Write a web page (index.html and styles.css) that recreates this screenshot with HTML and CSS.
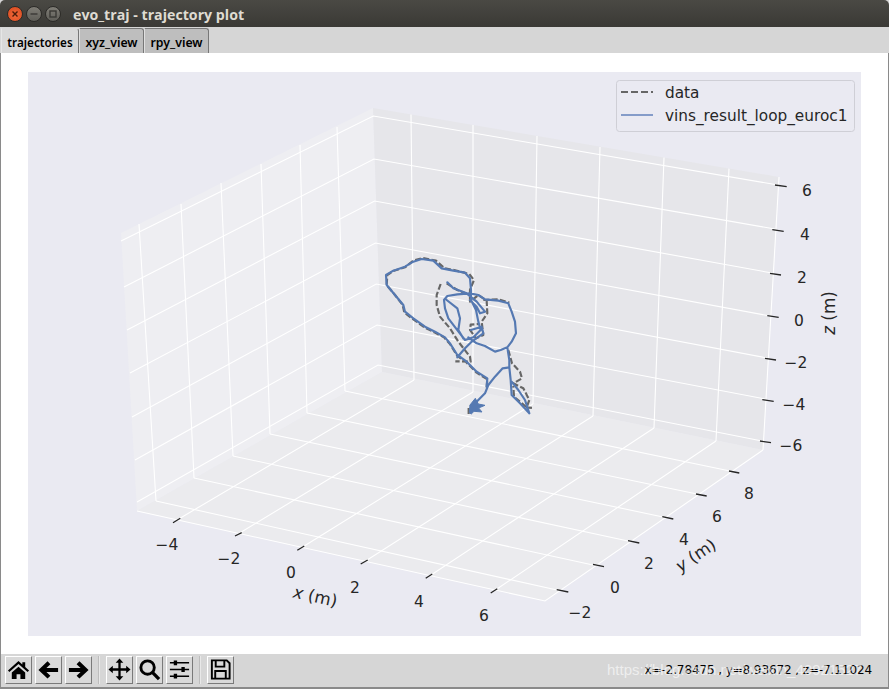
FILE: index.html
```html
<!DOCTYPE html>
<html lang="en">
<head>
<meta charset="utf-8">
<title>evo_traj - trajectory plot</title>
<link rel="stylesheet" href="styles.css">
</head>
<body>
<div class="window">
  <header class="titlebar">
    <span class="wbtn close"><svg viewBox="0 0 10 10" class="wglyph"><path d="M2.500 2.500l5 5M7.500 2.500l-5 5"/></svg></span>
    <span class="wbtn min"><svg viewBox="0 0 10 10" class="wglyph dim"><path d="M1.500 5h7"/></svg></span>
    <span class="wbtn max"><svg viewBox="0 0 10 10" class="wglyph dim"><rect x="2" y="2" width="6" height="6"/></svg></span>
    <span class="wtitle">evo_traj - trajectory plot</span>
  </header>
  <nav class="tabs">
    <span class="tab active">trajectories</span>
    <span class="tab">xyz_view</span>
    <span class="tab">rpy_view</span>
  </nav>
  <main class="figure">
    <svg class="plot" viewBox="28 72 833 564" width="833" height="564">
      <polygon class="pane-left" points="121,233 373,108 382,372 137,511"/>
      <polygon class="pane-right" points="373,108 779,177 763,450 382,372"/>
      <polygon class="pane-floor" points="137,511 382,372 763,450 545,601"/>

      <g class="grid">
        <path d="M121 241L373.300 116L778 185M124 287L374 159L775 229M127 330L374.600 201L772 273M130 373L375.400 243L770 316M132 417L376.200 284L767 358M135 460L377 325L765 399M137 502L378 365L762 441"/>
        <path d="M139 224L156 501M181 204L194 478M221 183L233 456M261 164L270 434M300 145L307 413M337 127L345 391"/>
        <path d="M411 114.500L414 380M473 125L473 392M537 136L533 404M600 147L593 416M664 157.500L654 428M729 168.600L716 441M779 177L763 450"/>
        <path d="M156 501L557 590M194 478L593 565M233 456L628 541M270 434L663 517M307 413L697 494M345 391L730 471"/>
        <path d="M177 520L414 380M238 534L473 392M301 548L533 404M364 562L593 416M428 577L654 428M494 591L716 441"/>
        <path d="M137 511L545 601L763 450"/>
      </g>

      <g class="ticks">
        <path d="M173 522.700L180.300 518.300M235 536L241.700 532.700M297.300 550.300L304.300 546M360.700 564L367.700 560M425.700 578.300L432.300 574M490.700 593L497.300 588.700"/>
        <path d="M729 471L739.300 473M696 494L706.700 496M662.300 516.700L673.300 519M628 540.700L639.300 543M593 564.300L604 566.700M556.700 589.700L568.300 592"/>
        <path d="M775 185L786.700 186.700M772.300 229.700L783.700 231.300M770 273.300L781 275M767.300 315.700L778.700 317.300M765 358.300L776 360M762.300 399.700L773.700 401.300M760 441L771 442.700"/>
      </g>

      <g class="tlabels">
        <text x="807" y="196">6</text><text x="805" y="240">4</text><text x="802" y="283">2</text><text x="799" y="326">0</text><text x="796" y="368">−2</text><text x="794" y="410">−4</text><text x="791" y="451">−6</text>
        <text x="167" y="550">−4</text><text x="229" y="564">−2</text><text x="291" y="578">0</text><text x="355" y="593">2</text><text x="419" y="607">4</text><text x="484" y="621">6</text>
        <text x="580" y="618">−2</text><text x="615" y="593">0</text><text x="649" y="569">2</text><text x="684" y="545">4</text><text x="717" y="522">6</text><text x="749" y="499">8</text>
      </g>
      <text class="axlabel" transform="translate(314 602) rotate(12.500)"><tspan class="ital">x</tspan> (m)</text>
      <text class="axlabel" transform="translate(699 560) rotate(-34)"><tspan class="ital">y</tspan> (m)</text>
      <text class="axlabel" transform="translate(835 313) rotate(-90)"><tspan class="ital">z</tspan> (m)</text>

      <g transform="translate(370 250) scale(0.3333)">
        <path class="traj-data" d="M296 492L296 472L312 462M350 412L352 388L320 368L290 338L262 318L240 282L222 262L195 248L165 233L130 208L103 188L98 165L75 135L50 105L52 75L72 62L105 52L130 32L158 24L198 32L224 55L252 60L298 72L312 90L300 120L300 155L325 135L350 152L352 190L335 215L340 255L318 265L300 240L302 224L326 222M212 102L200 135L200 165L210 200L240 235L265 275L300 320L302 335L256 334M230 100L262 120L292 132M415 300L426 340L450 365L456 385L430 400L460 415L478 450L470 472L432 440L430 408M340 150L385 148L418 158M468 472L490 474"/>
        <path class="traj-est" d="M350 410L352 385L320 365L290 335L262 315L240 280L225 262L195 245L165 230L130 205L105 185L100 165L75 135L50 105L48 75L70 62L105 50L130 35L155 27L190 32L215 55L250 62L285 68L300 85L303 120L303 150L318 180L325 215L332 240L310 262L285 270L258 235L235 205L225 175L222 150L232 138L262 133L300 130L325 135L345 148L385 152L415 160L425 185L435 215L438 250L425 275L412 292L392 300L375 305L345 288L320 280L295 262M232 97L250 115L290 130L320 155L345 185L330 190L320 170L300 150M230 150L262 175L270 205L265 240L280 265M262 322L285 295L305 275L340 250L335 230L303 240M412 292L418 330L418 352L398 355L375 380L355 405L345 430L325 450L305 470M418 352L422 390L425 435L450 460L478 490M425 395L445 420L465 450L478 490"/>
        <path class="traj-blob" d="M316 445L325 462L345 466L326 474L336 486L312 484L304 492L298 488L300 465z"/>
      </g>

      <rect class="legend-box" x="616.500" y="80.500" width="238" height="51" rx="3"/>
      <line class="legend-data" x1="621" y1="92" x2="653" y2="92"/>
      <line class="legend-est" x1="621" y1="115" x2="653" y2="115"/>
      <text class="legend-text" x="665" y="98">data</text>
      <text class="legend-text" x="665" y="121">vins_result_loop_euroc1</text>
    </svg>
  </main>
  <footer class="toolbar">
    <div class="tools">
      <span class="tool"><svg viewBox="0 0 24 24"><path class="ic" d="M12 3L1 13l1.500 1.600L12 6.200l9.500 8.400L23 13l-4-3.600V4.500h-3v2.200zM5 15.200V22h5v-5h4v5h5v-6.800L12 9z"/></svg></span>
      <span class="tool"><svg viewBox="0 0 24 24"><path class="ic" d="M11 3.500l3 3L9.800 10.500H22v4H9.800L14 18.500l-3 3L1.500 12.500z"/></svg></span>
      <span class="tool"><svg viewBox="0 0 24 24"><path class="ic" d="M13 3.500l-3 3 4.200 4H2v4h12.200L10 18.500l3 3 9.500-9z"/></svg></span>
      <span class="sep"></span>
      <span class="tool"><svg viewBox="0 0 24 24"><path class="ic" d="M12 0.500l4 4.500h-2.800v5.800H19V8l4.500 4-4.500 4v-2.800h-5.800V19H16l-4 4.500L8 19h2.800v-5.800H5V16L.5 12 5 8v2.800h5.800V5H8z"/></svg></span>
      <span class="tool"><svg viewBox="0 0 24 24"><circle class="ics" cx="10" cy="10" r="7" stroke-width="3"/><path class="ics" d="M15 15l7 7" stroke-width="3.500"/></svg></span>
      <span class="tool"><svg viewBox="0 0 24 24"><path class="ics" d="M2 5h20M2 12h20M2 19h20" stroke-width="1.500"/><path class="ic" d="M6 2.500h3.500v5H6zM14 9.500h3.500v5H14zM6 16.500h3.500v5H6z"/></svg></span>
      <span class="sep"></span>
      <span class="tool"><svg viewBox="0 0 24 24"><path class="ics" d="M3 2.500h15.500l3 3V21.500H3z" stroke-width="2"/><path class="ics" d="M7 3v6h9V3M6.500 21v-7.500h11V21" stroke-width="2"/></svg></span>
    </div>
    <span class="coords">x=-2.78475 , y=8.93672 , z=-7.11024</span>
  </footer>
  <span class="watermark">https://blog.csdn.net/weixin_40921527</span>
</div>
</body>
</html>
```
FILE: styles.css
```css
* { box-sizing: border-box; }
html, body { margin: 0; padding: 0; height: 100%; overflow: hidden; background: #3a3935; }
.window { position: relative; width: 889px; height: 689px; display: flex; flex-direction: column; background: #d6d6d6; }

.titlebar { height: 27px; flex: none; display: flex; align-items: center; padding: 1px 0 0 7px; background: linear-gradient(#4a4944, #3a3935); border-radius: 5px 5px 0 0; }
.wbtn { width: 16px; height: 16px; border-radius: 50%; display: flex; align-items: center; justify-content: center; margin-right: 3px; }
.wbtn.close { background: radial-gradient(circle at 50% 60%, #f0693a, #d8481d); border: 1px solid #2c2b28; }
.wbtn.min, .wbtn.max { background: linear-gradient(#7f7d76, #5f5e58); border: 1px solid #2c2b28; }
.wglyph { width: 10px; height: 10px; fill: none; stroke: #4a1c0a; stroke-width: 1.400; }
.wglyph.dim { stroke: #3a3935; }
.wtitle { margin-left: 9px; font: bold 14.200px "Open Sans", sans-serif; color: #dfdbd2; white-space: nowrap; }

.tabs { height: 26px; flex: none; display: flex; align-items: flex-end; padding-left: 1px; background: #d6d6d6; }
.tab { width: 65px; height: 25px; display: flex; align-items: center; justify-content: center; padding-top: 2px; font: 600 12.300px "Noto Sans", sans-serif; color: #000; background: #bebebe; border: 1px solid #777; border-bottom: 0; border-left-color: #e0e0e0; border-radius: 0 3px 0 0; }
.tab.active { width: 78px; font-size: 11.700px; background: #d9d9d9; border-color: #d9d9d9 #777 #d9d9d9 #e6e6e6; }

.figure { flex: 1; background: #fff; padding: 19px 28px 18px; border-left: 1px solid #8a8a8a; border-right: 1px solid #8a8a8a; min-height: 0; margin: 0; }
.plot { display: block; background: #eaeaf2; margin-left: -1px; }

.pane-left { fill: #eeeef2; }
.pane-right { fill: #e6e6ea; }
.pane-floor { fill: #ebebee; }
.grid path { fill: none; stroke: #fff; stroke-width: 1.100; }
.ticks path { fill: none; stroke: #262626; stroke-width: 1.300; }
.tlabels text { font: 15.500px "DejaVu Sans", sans-serif; fill: #262626; text-anchor: middle; }
.axlabel { font: 16.800px "DejaVu Sans", sans-serif; fill: #262626; text-anchor: middle; }
.ital { font-style: italic; }
.traj-data { fill: none; stroke: #666; stroke-width: 6.500; stroke-dasharray: 18 7; stroke-linejoin: round; }
.traj-est { fill: none; stroke: #5579b2; stroke-width: 6.500; stroke-linejoin: round; stroke-linecap: round; }
.traj-blob { fill: #5579b2; stroke: #5579b2; stroke-width: 3; stroke-linejoin: round; }
.legend-box { fill: #eaeaf2; stroke: #cfcfd6; stroke-width: 1; }
.legend-data { stroke: #666; stroke-width: 1.800; stroke-dasharray: 7 3; }
.legend-est { stroke: #7a93c4; stroke-width: 1.800; }
.legend-text { font: 15.300px "DejaVu Sans", sans-serif; fill: #262626; }

.toolbar { height: 35px; flex: none; display: flex; align-items: center; justify-content: space-between; padding: 0 16px 2px 5px; background: #d6d6d6; border: 1px solid #8a8a8a; border-width: 0 1px 2px 1px; }
.tools { display: flex; align-items: center; gap: 3px; margin-left: -1px; }
.tool { width: 27px; height: 28px; display: flex; align-items: center; justify-content: center; background: #d9d9d9; border: 1px solid; border-color: #fff #7a7a7a #7a7a7a #fff; }
.tool svg { width: 23px; height: 23px; display: block; }
.ic { fill: #000; }
.ics { fill: none; stroke: #000; }
.sep { width: 2px; height: 28px; margin: 0 3px; background: #bdbdbd; border-right: 1px solid #e8e8e8; }
.coords { font: 12px "DejaVu Sans", sans-serif; color: #000; white-space: nowrap; letter-spacing: -0.100px; }
.watermark { position: absolute; left: 607px; top: 661px; font: 15px "Liberation Sans", sans-serif; color: rgba(255,255,255,.6); white-space: nowrap; }
```
